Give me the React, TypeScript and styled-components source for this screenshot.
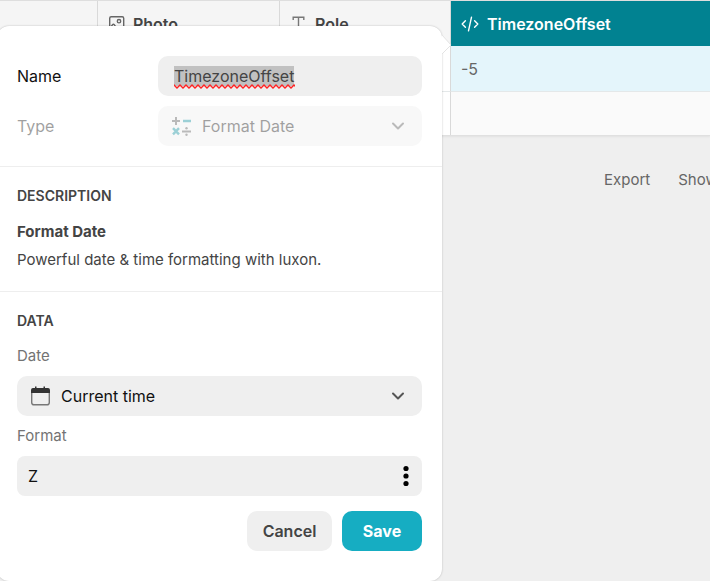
import React, { useEffect, useRef } from "react";
import styled, { createGlobalStyle, css } from "styled-components";

const GlobalStyle = createGlobalStyle`
  *, *::before, *::after { box-sizing: border-box; }
  html, body { margin: 0; background: #efefef; overflow: hidden; }
  body, button, input, select {
    font-family: Inter, "Liberation Sans", sans-serif;
    font-size: 16px;
  }
`;

const Page = styled.div`
  position: relative;
  min-height: 100vh;
  color: #444;
`;

const Grid = styled.table`
  width: 100%;
  table-layout: fixed;
  border-collapse: separate;
  border-spacing: 0;
  border-top: 1px solid #dedede;
  border-bottom: 1px solid #e0e0e0;
  box-shadow: 0 1px 2px rgba(0, 0, 0, 0.06);
`;

const Column = styled.col<{ $width?: number }>`
  ${(p) => p.$width && `width: ${p.$width}px;`}
`;

const HeadCell = styled.th<{ $active?: boolean }>`
  height: 45px;
  padding: 0 10px;
  text-align: left;
  font-weight: 600;
  line-height: 24px;
  background: ${(p) => (p.$active ? "#018291" : "#f5f5f5")};
  color: ${(p) => (p.$active ? "#fff" : "#444")};
  border-right: ${(p) => (p.$active ? "0" : "1px solid #d9d9d9")};
`;

const HeadLabel = styled.span`
  display: flex;
  align-items: center;
  gap: 8px;
`;

const Cell = styled.td<{ $active?: boolean }>`
  height: 46px;
  padding: 0 10px;
  color: #666;
  background: ${(p) => (p.$active ? "#e4f5fb" : "#fff")};
  border-right: 1px solid #d9d9d9;
  border-bottom: 1px solid #e4e8e9;
  &:last-child { border-right: 0; }
`;

const BlankCell = styled(Cell)`
  height: 43px;
  border-bottom: 0;
  &:last-child { background: #fafafa; }
`;

const GridActions = styled.div`
  display: flex;
  gap: 28px;
  margin: 34px 0 0 604px;
`;

const TextButton = styled.button`
  padding: 0;
  border: 0;
  background: none;
  color: #666;
  font-size: 15px;
  line-height: 20px;
  white-space: nowrap;
`;

const Popover = styled.form`
  position: absolute;
  top: 26px;
  left: -3px;
  width: 445px;
  background: #fff;
  border-radius: 12px;
  box-shadow: 0 0 2px rgba(0, 0, 0, 0.25);
`;

const Pointer = styled.svg`
  position: absolute;
  top: 9px;
  left: 100%;
`;

const Section = styled.section<{ $kind: "fields" | "about" | "data" }>`
  display: flex;
  flex-direction: column;
  ${(p) => p.$kind === "fields" && css`
    gap: 10px;
    padding: 30px 20px 20px;
    border-bottom: 1px solid #eee;
  `}
  ${(p) => p.$kind === "about" && css`
    padding: 19px 20px 21px;
    border-bottom: 1px solid #eee;
  `}
  ${(p) => p.$kind === "data" && css`
    gap: 10px;
    padding: 19px 20px 30px;
  `}
`;

const FieldRow = styled.div<{ $muted?: boolean }>`
  display: grid;
  grid-template-columns: 141px 1fr;
  align-items: center;
  color: #111;
  opacity: ${(p) => (p.$muted ? 0.4 : 1)};
`;

const FieldLabel = styled.label`
  line-height: 24px;
`;

const NameBox = styled.div`
  position: relative;
`;

const NameInput = styled.input`
  display: block;
  width: 100%;
  height: 40px;
  padding: 0 16px;
  border: 0;
  outline: 0;
  border-radius: 10px;
  background: #efefef;
  color: #444;
  line-height: 24px;
  &::selection { background: #c1c1c1; color: #444; }
`;

const SpellingMark = styled.svg`
  position: absolute;
  left: 16px;
  bottom: 7px;
  pointer-events: none;
`;

const Picker = styled.div`
  display: grid;
  align-items: center;
  & > * { grid-area: 1 / 1; }
  & > svg { pointer-events: none; z-index: 1; }
  & > svg:first-child { margin-left: 12px; }
  & > svg:last-child { justify-self: end; margin-right: 16px; }
`;

const Select = styled.select`
  appearance: none;
  width: 100%;
  height: 40px;
  padding: 0 40px 0 44px;
  border: 0;
  border-radius: 10px;
  background: #efefef;
  color: #111;
  opacity: 1;
`;

const SectionTitle = styled.h2<{ $spaced?: boolean }>`
  margin: 0 0 ${(p) => (p.$spaced ? 16 : 5)}px;
  font-size: 14px;
  font-weight: 600;
  line-height: 20px;
`;

const AboutTitle = styled.h3`
  margin: 0 0 8px;
  font-size: 15px;
  font-weight: 700;
  line-height: 20px;
`;

const AboutText = styled.p`
  margin: 0;
  font-size: 15px;
  line-height: 20px;
`;

const SmallLabel = styled.label`
  color: #737373;
  font-size: 15px;
  line-height: 20px;
`;

const FormatBox = styled.div`
  display: flex;
  height: 40px;
  border-radius: 8px;
  background: #efefef;
`;

const FormatInput = styled.input`
  flex: 1;
  min-width: 0;
  padding: 0 11px;
  border: 0;
  outline: 0;
  background: none;
  color: #111;
`;

const MoreButton = styled.button`
  display: flex;
  align-items: center;
  justify-content: center;
  width: 32px;
  padding: 0;
  border: 0;
  background: none;
`;

const Actions = styled.div`
  display: flex;
  justify-content: flex-end;
  gap: 10px;
  margin-top: 5px;
`;

const ActionButton = styled.button<{ $primary?: boolean }>`
  min-width: ${(p) => (p.$primary ? 80 : 85)}px;
  height: 40px;
  padding: 0 12px;
  border: 0;
  border-radius: 10px;
  background: ${(p) => (p.$primary ? "#16adc2" : "#efefef")};
  color: ${(p) => (p.$primary ? "#fff" : "#444")};
  font-weight: ${(p) => (p.$primary ? 700 : 600)};
`;

const ImageIcon = () => (
  <svg width="17" height="17" viewBox="0 0 17 17" fill="none" stroke="#666" strokeWidth="1.4">
    <rect x="1.7" y="1.7" width="14" height="14" rx="1.5" />
    <circle cx="11" cy="6.2" r="1.7" />
    <path d="M2 13l2.6-3.4a1 1 0 0 1 1.6 0L10 15" />
  </svg>
);

const TextIcon = () => (
  <svg width="17" height="17" viewBox="0 0 17 17" fill="none" stroke="#777" strokeWidth="1.4">
    <path d="M3.2 5V2.2h10.6V5M8.5 2.2v12.6M6 14.8h5" />
  </svg>
);

const CodeIcon = () => (
  <svg width="18" height="18" viewBox="0 0 18 18" fill="none" stroke="#fff" strokeWidth="1.4" strokeLinecap="round" strokeLinejoin="round">
    <path d="M4.4 5.7L1.2 9l3.2 3.3M13.6 5.7L16.8 9l-3.2 3.3M10.5 2.2L7.5 15.8" />
  </svg>
);

const MathIcon = () => (
  <svg width="22" height="22" viewBox="0 0 22 22" fill="none" strokeWidth="2">
    <path d="M2 6h8M6 2v8M12 16.5h9" stroke="#555" />
    <path d="M13 6h8M3 13.2l6 6.2M9 13.2l-6 6.2" stroke="#0a8c9a" strokeWidth="2.4" />
    <circle cx="16.5" cy="13.2" r="1.2" fill="#555" stroke="none" />
    <circle cx="16.5" cy="19.8" r="1.2" fill="#555" stroke="none" />
  </svg>
);

const CalendarIcon = () => (
  <svg width="22" height="22" viewBox="0 0 22 22" fill="none">
    <rect x="2.7" y="3.7" width="17.6" height="16.1" rx="2.4" stroke="#777" strokeWidth="1.4" />
    <path d="M2 8V5.4A2.4 2.4 0 0 1 4.4 3H6V1.5h1.5V3h7V1.5H16V3h2.6A2.4 2.4 0 0 1 21 5.4V8z" fill="#333" />
  </svg>
);

const Chevron = () => (
  <svg width="16" height="16" viewBox="0 0 16 16" fill="none" stroke="#555" strokeWidth="2" strokeLinecap="round" strokeLinejoin="round">
    <path d="M3 5.5l5 5 5-5" />
  </svg>
);

const DotsIcon = () => (
  <svg width="6" height="22" viewBox="0 0 6 22" fill="#000">
    <circle cx="3" cy="3.5" r="2.6" />
    <circle cx="3" cy="11" r="2.6" />
    <circle cx="3" cy="18.5" r="2.6" />
  </svg>
);

const Squiggle = () => (
  <SpellingMark width="121" height="5" viewBox="0 0 121 5" aria-hidden="true">
    <defs>
      <pattern id="wave" width="6" height="5" patternUnits="userSpaceOnUse">
        <path d="M-1.5 2.5L0 1 3 4 6 1l1.5 1.5" fill="none" stroke="#f22" strokeWidth="1.3" />
      </pattern>
    </defs>
    <rect width="121" height="5" fill="url(#wave)" />
  </SpellingMark>
);

export default function App() {
  const nameRef = useRef<HTMLInputElement>(null);

  useEffect(() => {
    nameRef.current?.focus();
    nameRef.current?.select();
  }, []);

  return (
    <Page>
      <GlobalStyle />
      <Grid>
        <colgroup>
          <Column $width={98} />
          <Column $width={182} />
          <Column $width={171} />
          <Column />
        </colgroup>
        <thead>
          <tr>
            <HeadCell />
            <HeadCell><HeadLabel><ImageIcon />Photo</HeadLabel></HeadCell>
            <HeadCell><HeadLabel><TextIcon />Role</HeadLabel></HeadCell>
            <HeadCell $active><HeadLabel><CodeIcon />TimezoneOffset</HeadLabel></HeadCell>
          </tr>
        </thead>
        <tbody>
          <tr><Cell /><Cell /><Cell /><Cell $active>-5</Cell></tr>
          <tr><BlankCell /><BlankCell /><BlankCell /><BlankCell /></tr>
        </tbody>
      </Grid>
      <GridActions>
        <TextButton type="button">Export</TextButton>
        <TextButton type="button">Show</TextButton>
      </GridActions>

      <Popover onSubmit={(e) => e.preventDefault()}>
        <Pointer width="10" height="20" viewBox="0 0 10 20">
          <path d="M0 0l9 10-9 9z" fill="#fff" />
          <path d="M0 0l9 10-9 9" fill="none" stroke="#e3e3e3" />
        </Pointer>
        <Section $kind="fields">
          <FieldRow>
            <FieldLabel htmlFor="name">Name</FieldLabel>
            <NameBox>
              <NameInput id="name" ref={nameRef} defaultValue="TimezoneOffset" spellCheck={false} />
              <Squiggle />
            </NameBox>
          </FieldRow>
          <FieldRow $muted>
            <FieldLabel htmlFor="type">Type</FieldLabel>
            <Picker>
              <MathIcon />
              <Select id="type" disabled><option>Format Date</option></Select>
              <Chevron />
            </Picker>
          </FieldRow>
        </Section>
        <Section $kind="about">
          <SectionTitle $spaced>DESCRIPTION</SectionTitle>
          <AboutTitle>Format Date</AboutTitle>
          <AboutText>Powerful date &amp; time formatting with luxon.</AboutText>
        </Section>
        <Section $kind="data">
          <SectionTitle>DATA</SectionTitle>
          <SmallLabel htmlFor="date">Date</SmallLabel>
          <Picker>
            <CalendarIcon />
            <Select id="date"><option>Current time</option></Select>
            <Chevron />
          </Picker>
          <SmallLabel htmlFor="format">Format</SmallLabel>
          <FormatBox>
            <FormatInput id="format" defaultValue="Z" />
            <MoreButton type="button" aria-label="More options"><DotsIcon /></MoreButton>
          </FormatBox>
          <Actions>
            <ActionButton type="button">Cancel</ActionButton>
            <ActionButton type="submit" $primary>Save</ActionButton>
          </Actions>
        </Section>
      </Popover>
    </Page>
  );
}
